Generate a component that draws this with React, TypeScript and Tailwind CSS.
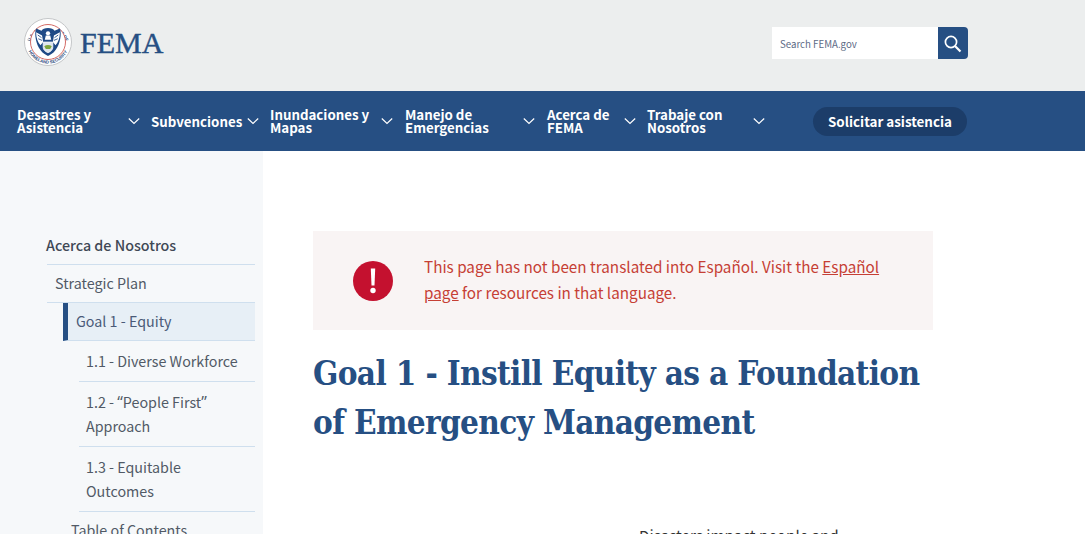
const SANS = 'font-["Noto_Sans_CJK_SC","Source_Sans_Pro",sans-serif]'

const NAV_ITEMS = [
  { lines: ['Desastres y', 'Asistencia'], width: 'w-[106px]', box: 'w-[134px]' },
  { lines: ['Subvenciones'], width: 'w-[91px]', box: 'w-[119px]' },
  { lines: ['Inundaciones y', 'Mapas'], width: 'w-[106px]', box: 'w-[135px]' },
  { lines: ['Manejo de', 'Emergencias'], width: 'w-[113px]', box: 'w-[142px]' },
  { lines: ['Acerca de', 'FEMA'], width: 'w-[72px]', box: 'w-[100px]' },
  { lines: ['Trabaje con', 'Nosotros'], width: 'w-[101px]', box: 'w-[166px]' },
]

function Seal() {
  return (
    <svg viewBox="0 0 48 48" className="w-12 h-12 shrink-0">
      <defs>
        <path id="sealTop" d="M5.3 27 A18.9 18.9 0 0 1 42.7 27" />
        <path id="sealBottom" d="M2.5 24 A21.5 21.5 0 0 0 45.5 24" />
      </defs>
      <circle cx="24" cy="24" r="23.5" fill="#ffffff" stroke="#c4c6c8" strokeWidth="1" />
      <text fontSize="4.3" fill="#2a4a7c" fontFamily="Liberation Sans, sans-serif" fontWeight="700">
        <textPath href="#sealTop" startOffset="50%" textAnchor="middle">U.S. DEPARTMENT OF</textPath>
      </text>
      <text fontSize="4.3" fill="#2a4a7c" fontFamily="Liberation Sans, sans-serif" fontWeight="700">
        <textPath href="#sealBottom" startOffset="50%" textAnchor="middle">HOMELAND SECURITY</textPath>
      </text>
      <circle cx="24" cy="24" r="17.5" fill="#ffffff" stroke="#c8453f" strokeWidth="0.8" />
      <g transform="translate(24 24) scale(1.08) translate(-24 -24)">
        <path d="M24 11 c3 0 5 1 6 2.500 l5-2 c2 5 0 15-4 20 c-2 3-5 4.500-7 5.500 c-2-1-5-2.500-7-5.500 c-4-5-6-15-4-20 l5 2 c1-1.500 3-2.500 6-2.500z" fill="#1f4a86" />
        <path d="M13 15 l5.500 3 l1 6 l-2.500 3 c-2.500-2.500-4-7-4-12z M35 15 l-5.500 3 l-1 6 l2.500 3 c2.500-2.500 4-7 4-12z" fill="#ffffff" />
        <path d="M14.500 17.500 l3.500 2.500 M15 21 l3.500 1.500 M33.500 17.500 l-3.500 2.500 M33 21 l-3.500 1.500" stroke="#1f4a86" strokeWidth="0.8" />
        <circle cx="24" cy="16" r="2" fill="#ffffff" />
        <path d="M22 18 h4 l1 4 h-6z" fill="#ffffff" />
        <path d="M19.500 24 h9 v5 c0 2.500-2.500 4-4.500 5 c-2-1-4.500-2.500-4.500-5z" fill="#dfe6ef" stroke="#ffffff" strokeWidth="0.6" />
        <path d="M20.500 28 c2-1.500 5-1.500 7 0 l-1.500 2.500 h-4z" fill="#7fa63c" />
      </g>
    </svg>
  )
}

function Chevron() {
  return (
    <svg viewBox="0 0 22 22" className="w-[22px] h-[22px] shrink-0" fill="none" stroke="#ffffff" strokeWidth="1.2">
      <path d="M5.800 8.500 L11 13.500 L16.200 8.500" />
    </svg>
  )
}

function NavItem({ lines, width, box }: { lines: string[]; width: string; box: string }) {
  return (
    <a className={`flex items-center ${box}`}>
      <span className={`${width} text-[13.3px] leading-[13px] font-bold text-white`}>
        {lines.map(line => (
          <span key={line} className="block">{line}</span>
        ))}
      </span>
      <Chevron />
    </a>
  )
}

export default function App() {
  return (
    <div className={`h-[534px] overflow-hidden bg-white ${SANS}`}>
      {/* Header */}
      <header className="h-[91px] bg-[#eceeee] flex items-center justify-between pl-6 pr-[117px]">
        <div className="flex items-center gap-2 -mt-[7px]">
          <Seal />
          <span className="mt-[2px] font-['Liberation_Serif',serif] text-[30px] leading-none text-[#264f83] [-webkit-text-stroke:0.4px_#264f83]">
            FEMA
          </span>
        </div>
        <div className="flex h-8 -mt-[5px]">
          <div className="w-[166px] bg-white pl-2 pt-[2px] flex items-center text-[9.7px] text-[#5c6a85]">
            Search FEMA.gov
          </div>
          <button className="w-[30px] bg-[#264f83] rounded-r flex items-center justify-center">
            <svg viewBox="0 0 18 18" className="w-[18px] h-[18px] mt-[2px] -ml-px" fill="none" stroke="#ffffff">
              <circle cx="7" cy="7" r="5.600" strokeWidth="1.700" />
              <path d="M11 11 L16.500 16.500" strokeWidth="2.200" />
            </svg>
          </button>
        </div>
      </header>

      {/* Nav */}
      <nav className="h-[60px] bg-[#264f83] flex items-center pl-[17px]">
        {NAV_ITEMS.map(item => (
          <NavItem key={item.lines[0]} {...item} />
        ))}
        <a className="w-[154px] h-[29px] rounded-full bg-[#1c3d69] text-white text-[13.4px] font-bold flex items-center justify-center">
          Solicitar asistencia
        </a>
      </nav>

      <div className="flex">
        {/* Sidebar */}
        <aside className="w-[263px] h-[383px] bg-[#f6f8fa] pt-[82px] pl-[47px] pr-2 text-[14.3px] text-[#515a66] shrink-0">
          <div className="h-[32px] border-b border-[#cfdfee] font-medium text-[#3f4855] leading-[24px]">
            <span className="-ml-px">Acerca de Nosotros</span>
          </div>
          <div className="h-[38px] border-b border-[#cfdfee] pl-2 pb-[2px] flex items-center">Strategic Plan</div>
          <div className="ml-4 h-[38px] bg-[#e7eff6] border-b border-[#cfdfee] border-l-[5px] border-l-[#264f83] pl-2 pb-[2px] flex items-center text-[#4a5a78]">
            Goal 1 - Equity
          </div>
          <div className="ml-8">
            <div className="h-[41px] border-b border-[#cfdfee] pl-[7px] flex items-center">1.1 - Diverse Workforce</div>
            <div className="h-[65px] border-b border-[#cfdfee] pl-[7px] pt-2 leading-6">
              1.2 - <span className="font-['Open_Sans',sans-serif] text-[16px] leading-none">“</span>People First<span className="font-['Open_Sans',sans-serif] text-[16px] leading-none">”</span> Approach
            </div>
            <div className="h-[65px] border-b border-[#cfdfee] pl-[7px] pt-2 leading-6 pr-10">1.3 - Equitable Outcomes</div>
          </div>
          <div className="pl-6 pt-[6px] leading-6">Table of Contents</div>
        </aside>

        {/* Main */}
        <main className="pl-[50px] pt-[80px] w-[670px]">
          <div className="h-[99px] bg-[#f9f4f4] flex items-center pl-10">
            <svg viewBox="0 0 40 40" className="w-10 h-10 shrink-0">
              <circle cx="20" cy="20" r="20" fill="#c4112f" />
              <path d="M17.800 7.500 h4.400 l-.7 17 h-3z" fill="#ffffff" />
              <circle cx="20" cy="29.500" r="2.700" fill="#ffffff" />
            </svg>
            <p className="ml-[31px] w-[462px] text-[15.25px] leading-[26px] text-[#c63f35] -mt-[4px]">
              This page has not been translated into Español. Visit the{' '}
              <a className="underline">Español page</a> for resources in that language.
            </p>
          </div>
          <h1 className="mt-[19px] font-['DejaVu_Serif_Condensed','DejaVu_Serif',serif] font-bold text-[33px] leading-[49px] text-[#264f83] tracking-[-0.65px]">
            Goal 1 - Instill Equity as a Foundation of Emergency Management
          </h1>
          <p className="mt-[76px] ml-[326px] text-[15.2px] leading-6 text-[#333333]">Disasters impact people and</p>
        </main>
      </div>
    </div>
  )
}
